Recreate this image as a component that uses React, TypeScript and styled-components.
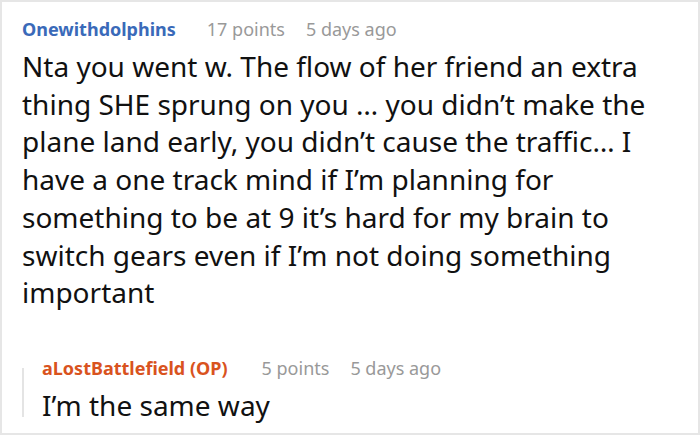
import React from "react";
import styled, { createGlobalStyle } from "styled-components";

const Global = createGlobalStyle`
  html, body { margin: 0; padding: 0; background: #ffffff; }
  body { font-family: "Noto Sans", "Open Sans", sans-serif; }
`;

const Card = styled.div`
  box-sizing: border-box;
  width: 700px;
  height: 435px;
  border: 2px solid #e6e6e6;
  padding: 14px 20px 0 20px;
  overflow: hidden;
`;

const Meta = styled.div`
  display: flex;
  align-items: baseline;
  font-size: 18px;
  line-height: 26px;
  white-space: nowrap;
`;

const Author = styled.span<{ $op?: boolean }>`
  font-weight: 700;
  color: ${(p) => (p.$op ? "#d9531e" : "#3a6ab9")};
  margin-right: ${(p) => (p.$op ? "34px" : "31px")};
`;

const Info = styled.span`
  color: #999999;
  margin-right: 21px;
`;

const Body = styled.p`
  margin: 6px 0 0 0;
  font-size: 28px;
  line-height: 37.7px;
  color: #111111;
`;

const Reply = styled.div`
  display: flex;
  margin-top: 43px;
`;

const Rail = styled.div`
  flex: 0 0 2px;
  margin: 13px 18px 8px 0;
  background: #e4e4e4;
`;

const ReplyContent = styled.div`
  flex: 1;
  min-width: 0;
`;

const Comment = ({
  author,
  op,
  points,
  ago,
  text,
}: {
  author: string;
  op?: boolean;
  points: string;
  ago: string;
  text: string;
}) => (
  <>
    <Meta>
      <Author $op={op}>{author}</Author>
      <Info>{points}</Info>
      <Info>{ago}</Info>
    </Meta>
    <Body>{text}</Body>
  </>
);

export default function App() {
  return (
    <>
      <Global />
      <Card>
        <Comment
          author="Onewithdolphins"
          points="17 points"
          ago="5 days ago"
          text="Nta you went w. The flow of her friend an extra thing SHE sprung on you … you didn’t make the plane land early, you didn’t cause the traffic… I have a one track mind if I’m planning for something to be at 9 it’s hard for my brain to switch gears even if I’m not doing something important"
        />
        <Reply>
          <Rail />
          <ReplyContent>
            <Comment
              author="aLostBattlefield (OP)"
              op
              points="5 points"
              ago="5 days ago"
              text="I’m the same way"
            />
          </ReplyContent>
        </Reply>
      </Card>
    </>
  );
}
